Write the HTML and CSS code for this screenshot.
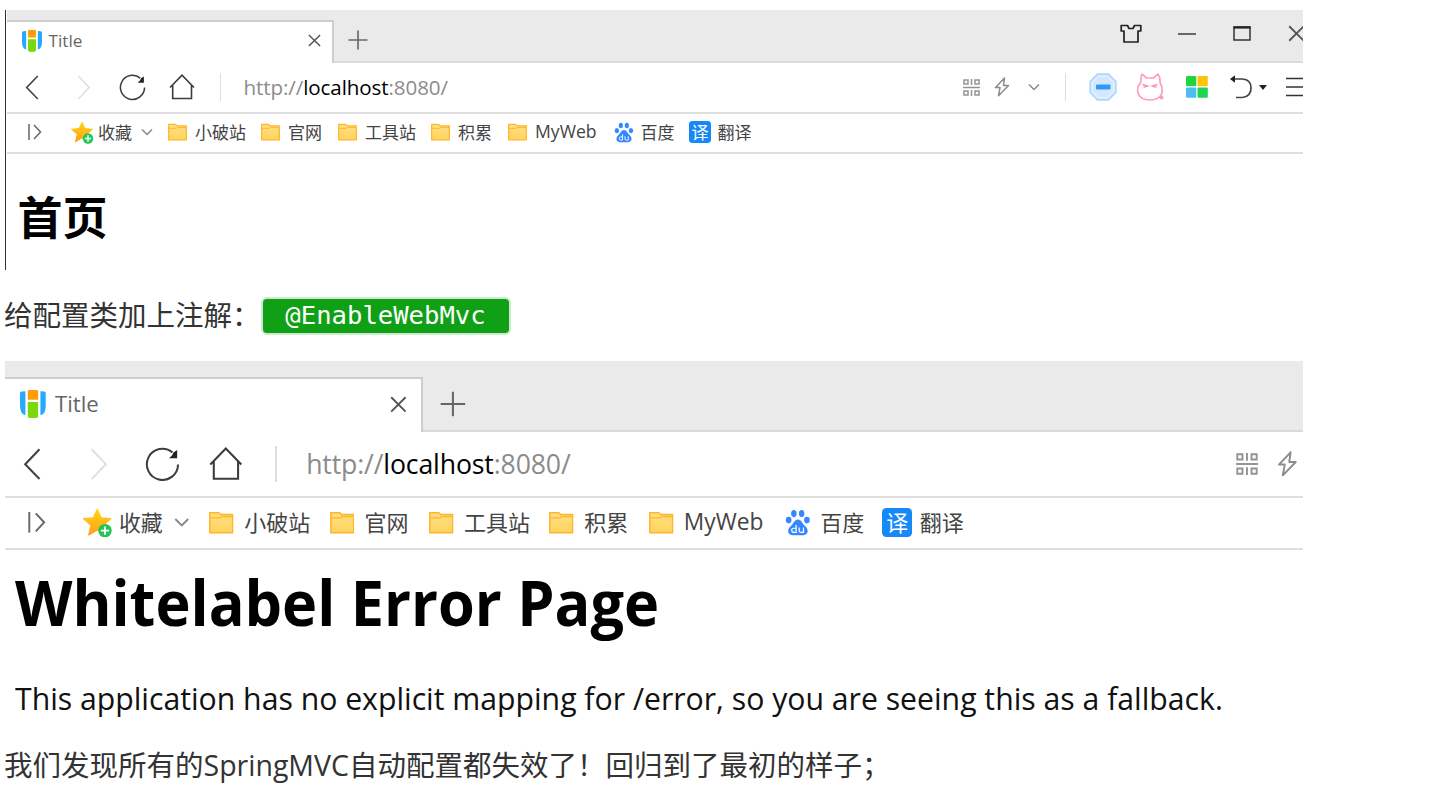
FILE: index.html
```html
<!DOCTYPE html>
<html lang="zh-CN">
<head>
<meta charset="utf-8">
<title>SpringMVC</title>
<link rel="stylesheet" href="styles.css">
</head>
<body>
<svg class="defs" aria-hidden="true">
  <defs>
    <linearGradient id="gold" x1="0" y1="0" x2="0" y2="1"><stop offset="0" stop-color="#ffd615"/><stop offset="1" stop-color="#ff9f1a"/></linearGradient>
    <linearGradient id="paper" x1="0" y1="0" x2="0" y2="1"><stop offset="0" stop-color="#ffe085"/><stop offset="1" stop-color="#ffd45c"/></linearGradient>
  </defs>
  <symbol id="favicon" viewBox="0 0 20 22">
    <path fill="#29a9fb" d="M0 2.500Q0 1.500 1.200 1.200L4.200 1V19.500Q2 19 1 17.200Q0 15 0 12zM20 2.500Q20 1.500 18.800 1.200L15.800 1V19.500Q18 19 19 17.200Q20 15 20 12z"/>
    <path fill="#ff9b05" d="M7 0h6q1 0 1 1v6.500H6V1q0-1 1-1z"/>
    <path fill="#7bd80a" d="M6 9.300H14v11.400Q13 22 10 22Q7 22 6 20.700z"/>
  </symbol>
  <symbol id="close" viewBox="0 0 14 14"><path d="M1 1l12 12M13 1L1 13" fill="none" stroke="#555" stroke-width="1.6"/></symbol>
  <symbol id="plus" viewBox="0 0 20 20"><path d="M10 .5v19M.5 10h19" fill="none" stroke="#666" stroke-width="1.6"/></symbol>
  <symbol id="back" viewBox="0 0 14 26"><path d="M13 1L1.500 13L13 25" fill="none" stroke="#444" stroke-width="1.700"/></symbol>
  <symbol id="forward" viewBox="0 0 14 26"><path d="M1 1l11.500 12L1 25" fill="none" stroke="#dedede" stroke-width="1.500"/></symbol>
  <symbol id="reload" viewBox="0 0 28 28"><path d="M26.500 14A12.500 12.500 0 1 1 22 4.300" fill="none" stroke="#3c3c3c" stroke-width="1.600"/><path d="M25.800 2.500v6.500h-6.500l2.500-2.300 1-2.200z" fill="#222"/></symbol>
  <symbol id="home" viewBox="0 0 26 26"><path d="M1 13.500L13 1.200L25 13.500M3.700 11V24.500H22.500V11" fill="none" stroke="#3c3c3c" stroke-width="1.600"/></symbol>
  <symbol id="side" viewBox="0 0 14 16"><path d="M1 0v16M6 1l6.500 7L6 15" fill="none" stroke="#666" stroke-width="1.500"/></symbol>
  <symbol id="star" viewBox="0 0 23 23"><path fill="url(#gold)" stroke="url(#gold)" stroke-linejoin="round" d="M11 1l2.900 6.600 7.600.7-5.800 5 1.800 7.200L11 17l-6.500 3.800 1.700-7.500L.5 8.300l7.600-.7z"/><circle cx="17" cy="17.500" r="5.200" fill="#1fc755"/><path d="M17 14.300v6.400M13.800 17.500h6.400" stroke="#fff" stroke-width="1.500"/></symbol>
  <symbol id="down" viewBox="0 0 12 8"><path d="M1 1.500l5 5 5-5" fill="none" stroke="#888" stroke-width="1.500"/></symbol>
  <symbol id="folder" viewBox="0 0 20 18"><path d="M.7 1H8l1.500 1.500H19.300V17.200H.7z" fill="url(#paper)" stroke="#ffb62f" stroke-width="1.300"/><path d="M1 5.200H9l1-1h9" fill="none" stroke="#ffb62f"/></symbol>
  <symbol id="paw" viewBox="0 0 20 22"><g fill="#3487ff"><ellipse cx="6.700" cy="3.700" rx="2.200" ry="2.900"/><ellipse cx="13" cy="3.700" rx="2.200" ry="2.900"/><ellipse cx="2.500" cy="9" rx="2.300" ry="2.700"/><ellipse cx="17.300" cy="9" rx="2.300" ry="2.700"/><path d="M10 8.500C7 8.500 6.500 12 4 14C1 16.500 1.500 21 5.500 21.200H14.500C18.500 21 19 16.500 16 14C13.500 12 13 8.500 10 8.500z"/></g><path d="M8.500 13v6H6.500q-1.500 0-1.500-1.700t1.500-1.700h2M11 15v2.500q0 1.500 1.500 1.500h2V15" fill="none" stroke="#fff"/></symbol>
  <symbol id="shirt" viewBox="0 0 22 19"><path d="M1.200 1.500H7.500L9 4.500h4l1.500-3h6.300V7H18v11H4V7H1.200z" fill="none" stroke="#222" stroke-width="1.700" stroke-linejoin="round"/></symbol>
  <symbol id="minus" viewBox="0 0 18 4"><path d="M0 2h18" stroke="#444" stroke-width="1.600"/></symbol>
  <symbol id="window" viewBox="0 0 18 15"><path d="M1 1h16v13H1z" fill="none" stroke="#333" stroke-width="1.500"/><path d="M.5 1.500h17" stroke="#222" stroke-width="2.200"/></symbol>
  <symbol id="qr" viewBox="0 0 17 17"><path d="M1 1h4v4H1zM12 1h4v4h-4zM1 12h4v4H1zM12 12h4v4h-4zM8.500 0v6M8.500 11v6M0 8.500h17" fill="none" stroke="#949494" stroke-width="1.500"/></symbol>
  <symbol id="bolt" viewBox="0 0 16 20"><path d="M10.500 1L1.500 10.500H6L4.500 18.800L14.500 8.500H9.500z" fill="none" stroke="#8c8c8c" stroke-width="1.500" stroke-linejoin="round"/></symbol>
  <symbol id="block" viewBox="0 0 28 28"><path d="M8.500 1h11L27 8.500v11L19.500 27h-11L1 19.500v-11z" fill="#d3e8ff" stroke="#a9d2ff" stroke-width="1.300"/><path d="M9.500 3.500h9l6 6v9l-6 6h-9l-6-6v-9z" fill="none" stroke="#eaf4ff"/><rect x="7" y="11.500" width="14.500" height="5" rx="1" fill="#3298fa"/></symbol>
  <symbol id="cat" viewBox="0 0 28 28"><path d="M5 9.500Q4.500 4 6 1.200L10.500 5h7L22 1.200Q24.500 4 24 9.500Q27 14.500 26 20Q23.500 27 14 27T2 20Q.500 13.500 5 9.500" fill="none" stroke="#ff9eb8" stroke-width="1.700" stroke-linejoin="round"/><path d="M6.500 11.500l5 1.500-4 1.300M21.500 11.500l-5 1.500 4 1.300" fill="none" stroke="#ff8fae" stroke-width="1.500"/><circle cx="25.500" cy="24.500" r="2" fill="#ff9eb8"/></symbol>
  <symbol id="apps" viewBox="0 0 22 22"><rect width="10.300" height="10.300" rx="1.300" fill="#20d43c"/><rect x="11.500" width="10.300" height="10.300" rx="1.300" fill="#ffc30b"/><rect y="11.500" width="10.300" height="10.300" rx="1.300" fill="#4cbdf2"/><rect x="11.500" y="11.500" width="10.300" height="10.300" rx="1.300" fill="#1dd552"/></symbol>
  <symbol id="undo" viewBox="0 0 23 24"><path d="M2 4H12.500Q21 4.500 21 13T12.500 22.500H6" fill="none" stroke="#444" stroke-width="1.700"/><path d="M0 4L5 .2v7.600z" fill="#222"/></symbol>
  <symbol id="caret" viewBox="0 0 8 5"><path d="M0 0h8L4 5z" fill="#222"/></symbol>
  <symbol id="menu" viewBox="0 0 20 20"><path d="M0 1.500h20M0 10h20M0 18.500h20" stroke="#333" stroke-width="1.500"/></symbol>
</svg>

<section class="browser first">
  <div class="tabs">
    <div class="tab">
      <svg class="i-fav"><use href="#favicon"/></svg><span class="tab-title">Title</span><svg class="i-close"><use href="#close"/></svg>
    </div>
    <svg class="i-plus"><use href="#plus"/></svg>
    <div class="window-tools">
      <svg class="i-shirt"><use href="#shirt"/></svg>
      <svg class="i-minus"><use href="#minus"/></svg>
      <svg class="i-window"><use href="#window"/></svg>
      <svg class="i-exit"><use href="#close"/></svg>
    </div>
  </div>
  <div class="address">
    <svg class="i-back"><use href="#back"/></svg>
    <svg class="i-back"><use href="#forward"/></svg>
    <svg class="i-reload"><use href="#reload"/></svg>
    <svg class="i-home"><use href="#home"/></svg>
    <i class="rule"></i>
    <span class="url">http://<b>localhost</b>:8080/</span>
    <svg class="i-qr"><use href="#qr"/></svg>
    <svg class="i-bolt"><use href="#bolt"/></svg>
    <svg class="i-down"><use href="#down"/></svg>
    <i class="rule"></i>
    <svg class="i-block"><use href="#block"/></svg>
    <svg class="i-block"><use href="#cat"/></svg>
    <svg class="i-apps"><use href="#apps"/></svg>
    <svg class="i-undo"><use href="#undo"/></svg>
    <svg class="i-caret"><use href="#caret"/></svg>
    <svg class="i-menu"><use href="#menu"/></svg>
  </div>
  <div class="bookmarks">
    <svg class="i-side"><use href="#side"/></svg>
    <svg class="i-star"><use href="#star"/></svg><span>收藏</span>
    <svg class="i-down"><use href="#down"/></svg>
    <svg class="i-folder"><use href="#folder"/></svg><span>小破站</span>
    <svg class="i-folder"><use href="#folder"/></svg><span>官网</span>
    <svg class="i-folder"><use href="#folder"/></svg><span>工具站</span>
    <svg class="i-folder"><use href="#folder"/></svg><span>积累</span>
    <svg class="i-folder"><use href="#folder"/></svg><span class="latin">MyWeb</span>
    <svg class="i-paw"><use href="#paw"/></svg><span>百度</span>
    <span class="yi">译</span><span>翻译</span>
  </div>
  <h1 class="home-title">首页</h1>
</section>

<p class="note">给配置类加上注解：<code>@EnableWebMvc</code></p>

<section class="browser second">
  <div class="tabs">
    <div class="tab">
      <svg class="i-fav"><use href="#favicon"/></svg><span class="tab-title">Title</span><svg class="i-close"><use href="#close"/></svg>
    </div>
    <svg class="i-plus"><use href="#plus"/></svg>
  </div>
  <div class="address">
    <svg class="i-back"><use href="#back"/></svg>
    <svg class="i-back"><use href="#forward"/></svg>
    <svg class="i-reload"><use href="#reload"/></svg>
    <svg class="i-home"><use href="#home"/></svg>
    <i class="rule"></i>
    <span class="url">http://<b>localhost</b>:8080/</span>
    <svg class="i-qr"><use href="#qr"/></svg>
    <svg class="i-bolt"><use href="#bolt"/></svg>
  </div>
  <div class="bookmarks">
    <svg class="i-side"><use href="#side"/></svg>
    <svg class="i-star"><use href="#star"/></svg><span>收藏</span>
    <svg class="i-down"><use href="#down"/></svg>
    <svg class="i-folder"><use href="#folder"/></svg><span>小破站</span>
    <svg class="i-folder"><use href="#folder"/></svg><span>官网</span>
    <svg class="i-folder"><use href="#folder"/></svg><span>工具站</span>
    <svg class="i-folder"><use href="#folder"/></svg><span>积累</span>
    <svg class="i-folder"><use href="#folder"/></svg><span class="latin">MyWeb</span>
    <svg class="i-paw"><use href="#paw"/></svg><span>百度</span>
    <span class="yi">译</span><span>翻译</span>
  </div>
  <h1 class="error-title">Whitelabel Error Page</h1>
  <p class="error-text">This application has no explicit mapping for /error, so you are seeing this as a fallback.</p>
</section>

<p class="note last">我们发现所有的SpringMVC自动配置都失效了！回归到了最初的样子；</p>
</body>
</html>
```
FILE: styles.css
```css
* { box-sizing: border-box; }
body {
  margin: 0;
  padding: 10px 0 0 5px;
  height: 787px;
  overflow: hidden;
  background: #fff;
  color: #333;
  font-family: "Open Sans", "Noto Sans CJK SC", sans-serif;
}
.defs { position: absolute; width: 0; height: 0; }
h1, p { margin: 0; white-space: nowrap; }

/* Browser captures: inner lengths are in em, so both scale from font-size */
.browser { width: 1298px; overflow: hidden; }
.browser svg { display: block; }
.first { --trim: 0em; height: 260px; font-size: 10px; border-left: 1.500px solid #27313f; padding-left: .5px; }
.second { --trim: .34em; height: 366px; font-size: 12.93px; }

.tabs {
  display: grid;
  grid-template-columns: calc(32.7em - var(--trim)) 77.900em 1fr;
  background: #eaeaea;
  box-shadow: inset 0 -2px #dadada;
}
.first .tabs { height: 52.500px; padding-top: 10px; }
.second .tabs { height: 71px; padding-top: 16px; }
.tab {
  display: grid;
  grid-template-columns: calc(4.2em - var(--trim)) 25.900em 1fr;
  align-items: center;
  padding-bottom: .2em;
  background: #fff;
  border-top: 2px solid #cdcdcd;
  border-right: 2px solid #cdcdcd;
}
.first .tab { padding-bottom: .3em; }
.tab .i-fav { justify-self: start; margin-left: calc(1.5em - var(--trim)); }
.tab-title { font-size: 1.72em; line-height: 1; color: #666; }
.tabs > .i-plus { margin: 1em 0 0 1.4em; }
.second .tabs > .i-plus { margin: 1.080em 0 0 1.300em; }
.window-tools { display: grid; grid-template-columns: 5.8em 5.5em 5.5em 2em; align-items: center; height: 2.7em; padding-left: .7em; }

.address {
  display: grid;
  align-items: center;
  border-bottom: 2px solid #dedede;
}
.first .address {
  height: 51px;
  padding-left: 18px;
  grid-template-columns: 5.200em 4.200em 5em 5.100em 2.400em 71.900em 3.100em 3.400em 3.700em 2.400em 4.700em 5em 4.400em 2.900em 2.700em 2em;
}
.second .address {
  height: 66px;
  padding-left: 18px;
  grid-template-columns: 5.200em 4.200em 5em 5.100em 2.400em 71.900em 3.200em 2em;
}
.rule { width: .15em; height: 2.8em; background: #dedede; }
.url { font-size: 2.06em; line-height: 1; letter-spacing: -.005em; color: #8b8b8b; }
.url b { font-weight: 400; color: #000; }

.bookmarks {
  display: grid;
  grid-template-columns: 4.300em 2.750em 4.300em 2.700em 2.700em 6.600em 2.700em 5em 2.700em 6.600em 2.700em 5em 2.700em 7.850em 2.700em 4.800em 2.900em 6em;
  align-items: center;
  padding-left: calc(2.1em - var(--trim));
  padding-bottom: 1px;
  border-bottom: 2px solid #dedede;
  color: #444;
}
.first .bookmarks { height: 40px; }
.second .bookmarks { height: 52px; }
.bookmarks span { font-size: 1.7em; line-height: 1; padding-bottom: .06em; font-family: "Noto Sans CJK SC", sans-serif; white-space: nowrap; }
.bookmarks .latin { font-family: "Open Sans", sans-serif; font-size: 1.76em; padding-bottom: 0; }
.bookmarks .yi {
  width: 1.35em; height: 1.35em;
  line-height: 1.3em;
  text-align: center;
  border-radius: .2em;
  background: #1688f8;
  color: #fff;
}

.i-fav { width: 2em; height: 2.2em; }
.i-close { width: 1.3em; height: 1.3em; }
.i-plus { width: 2em; height: 2em; }
.i-back { width: 1.4em; height: 2.5em; }
.i-reload { width: 2.7em; height: 2.7em; }
.i-home { width: 2.6em; height: 2.6em; }
.i-side { width: 1.4em; height: 1.6em; }
.i-star { width: 2.3em; height: 2.3em; }
.i-down { width: 1.2em; height: .8em; }
.i-folder { width: 1.900em; height: 1.8em; }
.i-paw { width: 2em; height: 2.1em; }
.i-shirt { width: 2.2em; height: 1.9em; }
.i-minus { width: 1.8em; height: .4em; }
.i-window { width: 1.8em; height: 1.5em; }
.i-exit { width: 1.7em; height: 1.7em; }
.i-qr { width: 1.7em; height: 1.7em; }
.i-bolt { width: 1.6em; height: 2em; }
.i-block { width: 2.8em; height: 2.8em; }
.i-apps { width: 2.2em; height: 2.2em; }
.i-undo { width: 2.3em; height: 2.4em; }
.i-caret { width: .8em; height: .5em; }
.i-menu { width: 2em; height: 2em; }

.home-title {
  padding: 30px 0 0 11px;
  font: 700 45px/64px "Noto Sans CJK SC", sans-serif;
  color: #000;
}
/* Open Sans condensed slightly to the proportions of a system UI face */
.error-title {
  padding: 8px 0 0 10px;
  font: 700 63px/88px "Open Sans", sans-serif;
  color: #000;
  transform: scaleX(.943);
  transform-origin: 10px 0;
}
.error-text {
  padding: 29px 0 0 10px;
  font: 400 31.500px/46px "Open Sans", sans-serif;
  color: #111;
  transform: scaleX(.9585);
  transform-origin: 10px 0;
}

.note { display: flex; align-items: center; height: 91px; margin-left: -1px; font-size: 28.500px; line-height: 1; }
.note code {
  height: 38px;
  width: 250px;
  border: 2px solid #cde8cf;
  border-radius: 6px;
  background: #0fa016;
  color: #fff;
  font: 25.600px/33px "DejaVu Sans Mono", monospace;
  text-align: center;
}
.last { height: 76px; }
```
